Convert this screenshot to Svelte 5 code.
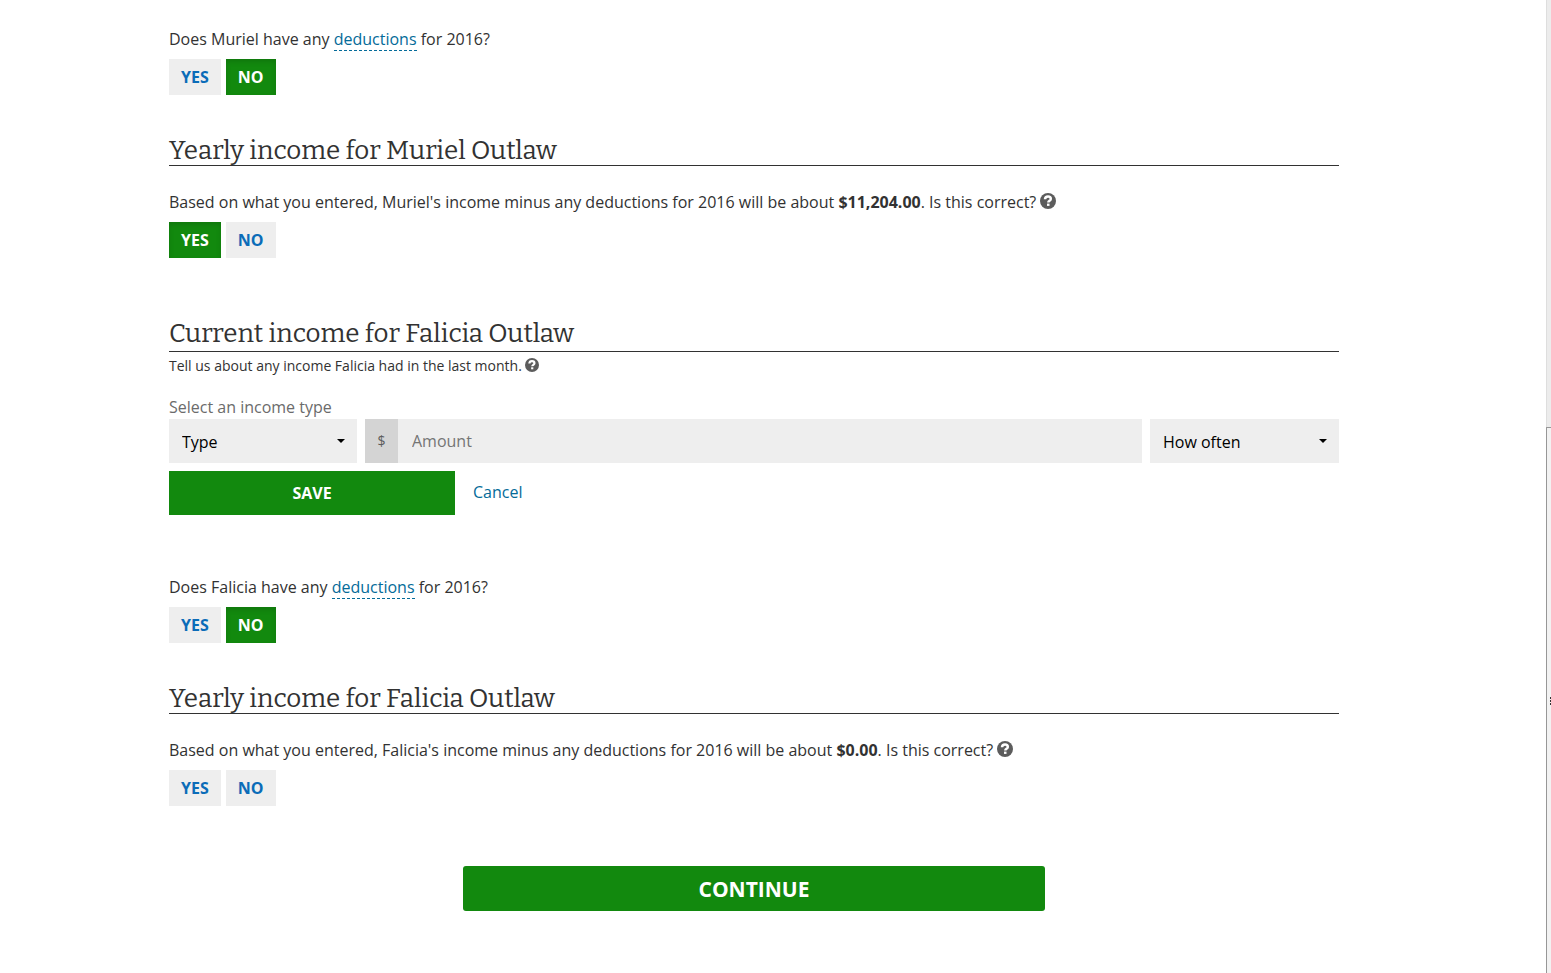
<script>
  let amount = $state('');
  let incomeType = $state('');
  let frequency = $state('');
  let answers = $state({
    murielDeductions: 'no',
    murielYearly: 'yes',
    faliciaDeductions: 'no',
    faliciaYearly: ''
  });
</script>

{#snippet help(label)}
  <button class="help" type="button" aria-label={label}>
    <svg viewBox="0 0 16 16" aria-hidden="true">
      <circle cx="8" cy="8" r="8" fill="#5c5c5c" />
      <path
        d="M5 6.3C5.1 4.4 6.4 3.6 8 3.6c1.7 0 2.8.9 2.8 2.3 0 1.9-2.5 1.9-2.5 3.6"
        fill="none"
        stroke="#fff"
        stroke-width="2.5"
      />
      <rect x="7" y="10.6" width="2.5" height="2.3" fill="#fff" />
    </svg>
  </button>
{/snippet}

{#snippet choice(key, label)}
  <div class="choice" role="group" aria-label={label}>
    {#each ['yes', 'no'] as value}
      <button
        type="button"
        class:selected={answers[key] === value}
        aria-pressed={answers[key] === value}
        onclick={() => (answers[key] = value)}>{value.toUpperCase()}</button>
    {/each}
  </div>
{/snippet}

{#snippet arrow()}
  <svg class="arrow" viewBox="0 0 8 4" aria-hidden="true"><path d="M0 0h8L4 4z" /></svg>
{/snippet}

<div class="page">
  <main>
    <div class="content">
      <p>Does Muriel have any <a class="term" href="#deductions">deductions</a> for 2016?</p>
      {@render choice('murielDeductions', 'Muriel deductions')}

      <h2>Yearly income for Muriel Outlaw</h2>
      <p>
        Based on what you entered, Muriel's income minus any deductions for 2016 will be about
        <strong>$11,204.00</strong>. Is this correct? {@render help('Help with yearly income')}
      </p>
      {@render choice('murielYearly', 'Muriel yearly income is correct')}

      <h2 class="current">Current income for Falicia Outlaw</h2>
      <p class="hint">
        Tell us about any income Falicia had in the last month. {@render help('Help with current income')}
      </p>

      <form onsubmit={(e) => e.preventDefault()}>
        <label class="caption" for="income-type">Select an income type</label>
        <div class="fields">
          <div class="select">
            <select id="income-type" bind:value={incomeType}>
              <option value="">Type</option>
              <option value="job">Job</option>
            </select>
            {@render arrow()}
          </div>
          <div class="money">
            <label for="amount">$</label>
            <input id="amount" type="text" placeholder="Amount" bind:value={amount} />
          </div>
          <div class="select">
            <select aria-label="How often" bind:value={frequency}>
              <option value="">How often</option>
              <option value="monthly">Monthly</option>
            </select>
            {@render arrow()}
          </div>
        </div>
        <div class="actions">
          <button class="save" type="submit">SAVE</button>
          <a href="#cancel">Cancel</a>
        </div>
      </form>

      <p>Does Falicia have any <a class="term" href="#deductions">deductions</a> for 2016?</p>
      {@render choice('faliciaDeductions', 'Falicia deductions')}

      <h2>Yearly income for Falicia Outlaw</h2>
      <p>
        Based on what you entered, Falicia's income minus any deductions for 2016 will be about
        <strong>$0.00</strong>. Is this correct? {@render help('Help with yearly income')}
      </p>
      {@render choice('faliciaYearly', 'Falicia yearly income is correct')}

      <button class="continue" type="button">CONTINUE</button>
    </div>
  </main>
  <div class="scroll" aria-hidden="true">
    <div class="thumb"><i></i><i></i><i></i></div>
  </div>
</div>

<style>
  :global(body) {
    margin: 0;
    background: #fff;
  }

  .page {
    display: flex;
    min-height: 100vh;
    color: #323232;
    font: 16px/24px 'Open Sans', sans-serif;
  }

  main {
    flex: 1;
    min-width: 0;
    box-sizing: border-box;
    padding: 27px 38px 60px 0;
  }

  .content {
    max-width: 1170px;
    margin: 0 auto;
  }

  p,
  h2 {
    margin: 0;
  }

  a {
    color: #046b99;
    text-decoration: none;
  }

  .term {
    border-bottom: 1px dashed #046b99;
  }

  h2 {
    margin: 42px 0 24px;
    border-bottom: 1px solid #323232;
    font: 26px/28px Bitter, 'DejaVu Serif', serif;
  }

  h2.current {
    margin: 62px 0 4px;
    padding-bottom: 3px;
  }

  .hint {
    font-size: 14px;
    line-height: 20px;
  }

  button,
  input,
  select {
    box-sizing: border-box;
    margin: 0;
    border: 0;
    border-radius: 0;
    font: inherit;
  }

  button {
    padding: 0;
    cursor: pointer;
  }

  .help {
    width: 1em;
    height: 1em;
    background: none;
    vertical-align: -1px;
  }

  .help svg {
    display: block;
    width: 100%;
    height: 100%;
  }

  .choice {
    display: flex;
    gap: 5px;
    margin-top: 8px;
  }

  .choice button {
    height: 36px;
    padding: 0 12px;
    background: #eee;
    color: #0b6cb8;
    font-weight: 700;
  }

  .choice .selected {
    background: #12890e;
    box-shadow: inset 0 3px 5px rgba(0, 0, 0, 0.125);
    color: #fff;
  }

  form {
    margin: 19px 0 60px;
  }

  .caption {
    display: block;
    color: #6b6b6b;
  }

  .fields {
    display: grid;
    grid-template-columns: 188px 1fr 189px;
    gap: 8px;
  }

  .select {
    position: relative;
  }

  select {
    width: 100%;
    height: 44px;
    padding: 2px 32px 0 13px;
    appearance: none;
    background: #eee;
    color: #000;
  }

  .arrow {
    position: absolute;
    top: 20px;
    right: 12px;
    width: 8px;
    height: 4px;
    pointer-events: none;
  }

  .money {
    display: flex;
    height: 44px;
    background: #eee;
  }

  .money label {
    width: 33px;
    background: #d4d4d4;
    color: #5c5c5c;
    font-size: 14px;
    line-height: 44px;
    text-align: center;
  }

  .money input {
    flex: 1;
    min-width: 0;
    padding: 0 14px;
    background: none;
  }

  .money input::placeholder {
    color: #757575;
    opacity: 1;
  }

  .actions {
    display: flex;
    gap: 18px;
    margin-top: 8px;
    line-height: 42px;
  }

  .save,
  .continue {
    background: #12890e;
    color: #fff;
    font-weight: 700;
  }

  .save {
    width: 286px;
    height: 44px;
  }

  .continue {
    display: block;
    width: 582px;
    max-width: 100%;
    height: 45px;
    margin: 60px auto 0;
    border-radius: 3px;
    font-size: 21px;
  }

  .scroll {
    display: flex;
    flex-direction: column;
    justify-content: flex-end;
    width: 5px;
    border-left: 1px solid #dedede;
    box-sizing: border-box;
    background: #ececec;
  }

  .thumb {
    display: flex;
    flex-direction: column;
    align-items: flex-end;
    justify-content: center;
    gap: 1px;
    height: 56%;
    margin-left: -1px;
    border-top: 1px solid #979797;
    border-left: 1px solid #979797;
    border-top-left-radius: 1px;
    background: #f2f2f2;
  }

  .thumb i {
    width: 1px;
    height: 2px;
    background: #333;
  }
</style>
